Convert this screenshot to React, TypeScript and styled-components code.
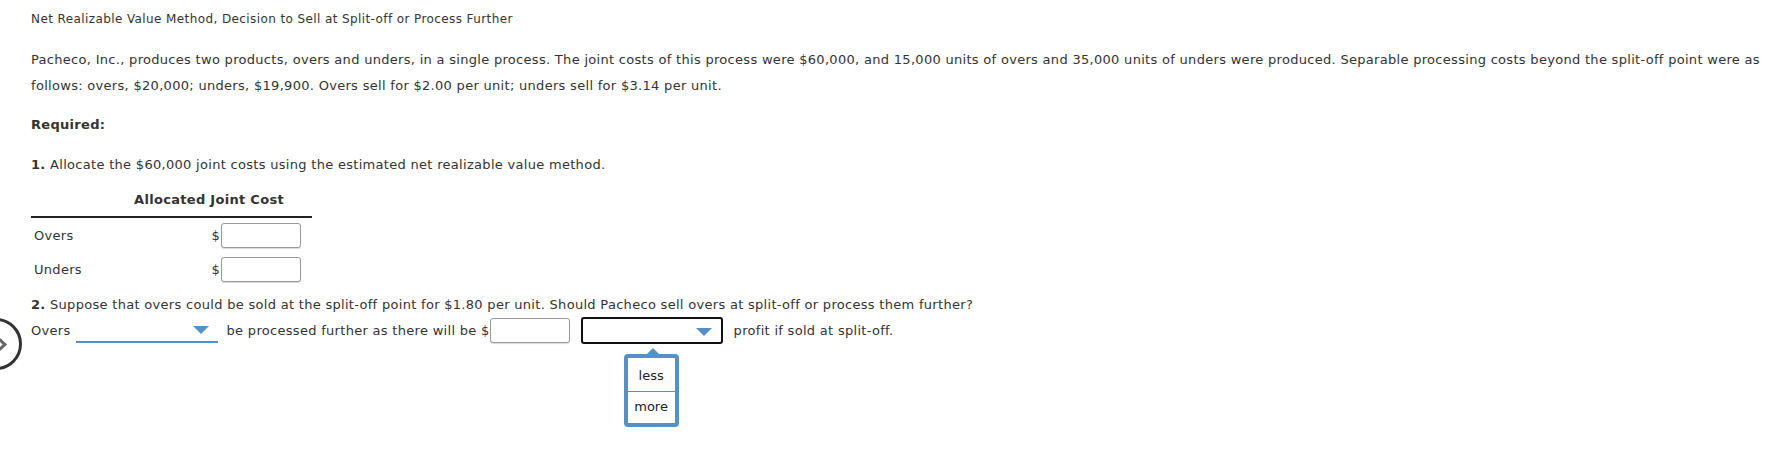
import React from 'react';
import styled, { createGlobalStyle } from 'styled-components';

const GlobalStyle = createGlobalStyle`
  html, body {
    margin: 0;
    padding: 0;
    background: #fff;
  }
  body {
    font-family: 'DejaVu Sans', Verdana, sans-serif;
    font-size: 13px;
    letter-spacing: 0.3px;
    color: #333;
  }
`;

const Page = styled.div`
  position: relative;
  box-sizing: border-box;
  min-height: 464px;
  padding: 10px 0 0 31px;
  width: 1775px;
  overflow: hidden;
`;

const Title = styled.div`
  font-size: 12px;
  letter-spacing: 0.4px;
  line-height: 18px;
  margin-bottom: 19px;
`;

const Para = styled.p`
  margin: 0 0 17px;
  line-height: 26px;
  width: 1735px;
`;

const Required = styled.div`
  font-weight: bold;
  line-height: 18px;
  margin-bottom: 22px;
`;

const Question = styled.div<{ $top?: number }>`
  line-height: 18px;
  margin-top: ${p => p.$top ?? 0}px;
`;

const Table = styled.div`
  width: 281px;
  margin-top: 17px;
`;

const TableHead = styled.div`
  display: flex;
  justify-content: flex-end;
  padding: 0 28px 7px 0;
  font-weight: bold;
  line-height: 18px;
  border-bottom: 2px solid #222;
`;

const TableRow = styled.div`
  display: flex;
  align-items: center;
  height: 34px;
  padding-left: 3px;
`;

const RowLabel = styled.span`
  flex: 1;
`;

const Dollar = styled.span`
  margin-right: 1px;
`;

const MoneyInput = styled.input`
  box-sizing: border-box;
  width: 80px;
  height: 25px;
  margin-right: 11px;
  border: 1px solid #999;
  border-radius: 3px;
  box-shadow: 0 1px 1px rgba(0, 0, 0, 0.15);
  font: inherit;
  outline: none;
`;

const Answer = styled.div`
  display: flex;
  align-items: center;
  margin-top: 2px;
  height: 28px;
`;

const Underline = styled.div`
  position: relative;
  box-sizing: border-box;
  width: 142px;
  height: 26px;
  margin: 0 9px 0 5px;
  border-bottom: 2px solid #5591c7;
`;

const Arrow = styled.span`
  position: absolute;
  right: 9px;
  top: 9px;
  width: 0;
  height: 0;
  border-left: 8px solid transparent;
  border-right: 8px solid transparent;
  border-top: 8px solid #5591c7;
`;

const InlineInput = styled(MoneyInput)`
  margin: 0 11px 0 0;
`;

const SelectWrap = styled.div`
  position: relative;
  margin-right: 11px;
`;

const SelectBox = styled.div`
  position: relative;
  box-sizing: border-box;
  width: 142px;
  height: 27px;
  border: 2px solid #111;
  border-radius: 3px;
`;

const Popup = styled.div`
  position: absolute;
  top: 37px;
  left: 43px;
  box-sizing: border-box;
  width: 55px;
  height: 73px;
  border: 4px solid #5591c7;
  border-radius: 4px;
  background: #fff;
  display: flex;
  flex-direction: column;
  align-items: center;
  &::before {
    content: '';
    position: absolute;
    top: -10px;
    left: 19px;
    border-left: 6px solid transparent;
    border-right: 6px solid transparent;
    border-bottom: 6px solid #5591c7;
  }
`;

const Option = styled.div<{ $divider?: boolean }>`
  width: 47px;
  text-align: center;
  line-height: 30px;
  height: 30px;
  color: #222;
  letter-spacing: 0;
  border-bottom: ${p => (p.$divider ? '1px solid #5591c7' : 'none')};
  margin-top: ${p => (p.$divider ? '3px' : '0')};
`;

const NavButton = styled.div`
  position: absolute;
  left: -30px;
  top: 318px;
  width: 52px;
  height: 52px;
  box-sizing: border-box;
  border: 3px solid #333;
  border-radius: 50%;
  background: #fff;
  &::after {
    content: '';
    position: absolute;
    left: 23px;
    top: 19px;
    width: 6px;
    height: 6px;
    border-top: 3px solid #666;
    border-right: 3px solid #666;
    transform: rotate(45deg);
  }
`;

export default function App() {
  return (
    <>
      <GlobalStyle />
      <Page>
        <Title>Net Realizable Value Method, Decision to Sell at Split-off or Process Further</Title>
        <Para>
          Pacheco, Inc., produces two products, overs and unders, in a single process. The joint costs of this process
          were $60,000, and 15,000 units of overs and 35,000 units of unders were produced. Separable processing costs
          beyond the split-off point were as follows: overs, $20,000; unders, $19,900. Overs sell for $2.00 per unit;
          unders sell for $3.14 per unit.
        </Para>
        <Required>Required:</Required>
        <Question>
          <b>1.</b> Allocate the $60,000 joint costs using the estimated net realizable value method.
        </Question>
        <Table>
          <TableHead>Allocated Joint Cost</TableHead>
          <TableRow>
            <RowLabel>Overs</RowLabel>
            <Dollar>$</Dollar>
            <MoneyInput />
          </TableRow>
          <TableRow>
            <RowLabel>Unders</RowLabel>
            <Dollar>$</Dollar>
            <MoneyInput />
          </TableRow>
        </Table>
        <Question $top={10}>
          <b>2.</b> Suppose that overs could be sold at the split-off point for $1.80 per unit. Should Pacheco sell
          overs at split-off or process them further?
        </Question>
        <Answer>
          <span>Overs</span>
          <Underline>
            <Arrow />
          </Underline>
          <span>be processed further as there will be $</span>
          <InlineInput />
          <SelectWrap>
            <SelectBox>
              <Arrow />
            </SelectBox>
            <Popup>
              <Option $divider>less</Option>
              <Option>more</Option>
            </Popup>
          </SelectWrap>
          <span>profit if sold at split-off.</span>
        </Answer>
        <NavButton />
      </Page>
    </>
  );
}
